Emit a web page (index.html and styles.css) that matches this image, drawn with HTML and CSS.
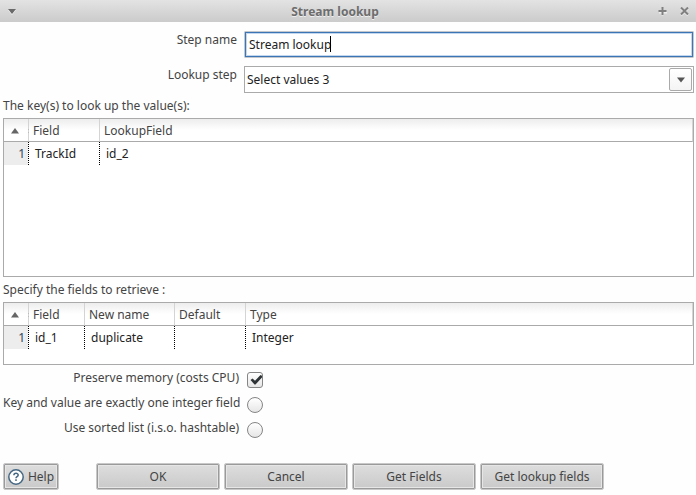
FILE: index.html
```html
<!DOCTYPE html>
<html lang="en">
<head>
<meta charset="utf-8">
<title>Stream lookup</title>
<link rel="stylesheet" href="styles.css">
</head>
<body>
<header class="titlebar">
  <button class="window-button" type="button" aria-label="Window menu">
    <svg width="10" height="7" viewBox="0 0 10 7"><path d="M1 2h8L5 7z" fill="#fff" opacity=".7"/><path d="M1 1h8L5 6z" fill="#6a6a6a"/></svg>
  </button>
  <h1 class="title">Stream lookup</h1>
  <div class="window-actions">
    <button class="window-button" type="button" aria-label="Maximize">
      <svg width="9" height="9" viewBox="0 0 9 9"><path d="M4.500 1.500v7M1 5.500h8" stroke="#fff" stroke-width="2" opacity=".6"/><path d="M4.500 0v8M.5 4h8" stroke="#808080" stroke-width="2"/></svg>
    </button>
    <button class="window-button" type="button" aria-label="Close">
      <svg width="9" height="9" viewBox="0 0 9 9"><path d="M1 1.500l7 7M8 1.500l-7 7" stroke="#fff" stroke-width="2" opacity=".6"/><path d="M1 .5l7 7M8 .5l-7 7" stroke="#808080" stroke-width="2"/></svg>
    </button>
  </div>
</header>
<form class="dialog">
  <div class="fields">
    <label for="step-name">Step name</label>
    <div class="text-box">
      <input class="text-input" id="step-name" type="text" value="Stream lookup">
      <span class="caret-line" aria-hidden="true"><span class="caret-text">Stream lookup</span></span>
    </div>
    <label for="lookup-step">Lookup step</label>
    <div class="combo">
      <select class="combo-select" id="lookup-step"><option>Select values 3</option></select>
      <span class="combo-arrow" aria-hidden="true"><svg width="8" height="6" viewBox="0 0 8 6"><path d="M0 .5h8L4 5.500z" fill="#555"/></svg></span>
    </div>
  </div>

  <h2 class="caption" id="keys-caption">The key(s) to look up the value(s):</h2>
  <div class="grid-box keys-box">
    <table class="grid" aria-labelledby="keys-caption">
      <colgroup><col class="col-number"><col class="col-key"><col></colgroup>
      <thead><tr>
        <th><svg class="sort" width="18" height="6" viewBox="0 0 18 6"><path d="M4 0l4 5.500H0z" fill="#666"/><path d="M17 1h1v1h-1zM17 4h1v1h-1z" fill="#bbb"/></svg></th>
        <th>Field</th><th>LookupField</th>
      </tr></thead>
      <tbody><tr><td>1</td><td>TrackId</td><td>id_2</td></tr></tbody>
    </table>
  </div>

  <h2 class="caption" id="values-caption">Specify the fields to retrieve :</h2>
  <div class="grid-box values-box">
    <table class="grid" aria-labelledby="values-caption">
      <colgroup><col class="col-number"><col class="col-field"><col class="col-name"><col class="col-default"><col></colgroup>
      <thead><tr>
        <th><svg class="sort" width="18" height="6" viewBox="0 0 18 6"><path d="M4 0l4 5.500H0z" fill="#666"/><path d="M17 1h1v1h-1zM17 4h1v1h-1z" fill="#bbb"/></svg></th>
        <th>Field</th><th>New name</th><th>Default</th><th>Type</th>
      </tr></thead>
      <tbody><tr><td>1</td><td>id_1</td><td>duplicate</td><td></td><td>Integer</td></tr></tbody>
    </table>
  </div>

  <div class="options">
    <label for="preserve">Preserve memory (costs CPU)</label>
    <span class="check">
      <input class="tick" id="preserve" type="checkbox" checked>
      <svg class="mark" width="16" height="16" viewBox="0 0 16 16"><path d="M3.500 8l2-1.500L8 8.800 13.500 3l1.500.8v1.700L8.500 12.500H7.500z" fill="#2e3436"/></svg>
    </span>
    <label for="integer-pair">Key and value are exactly one integer field</label>
    <input class="tick round" id="integer-pair" type="radio" name="mode">
    <label for="sorted-list">Use sorted list (i.s.o. hashtable)</label>
    <input class="tick round" id="sorted-list" type="radio" name="mode">
  </div>

  <div class="actions">
    <button class="button help" type="button">
      <svg width="16" height="16" viewBox="0 0 16 16"><circle cx="8" cy="8" r="7.200" fill="#fff" stroke="#456783" stroke-width="1.500"/><path d="M5.900 6.200C5.900 3.700 10.200 3.800 10.200 6.100 10.200 7.700 8 7.600 8 9.200" fill="none" stroke="#456783" stroke-width="1.500"/><rect x="7.200" y="10.300" width="1.600" height="1.600" fill="#456783"/></svg>
      Help</button>
    <button class="button" type="button">OK</button>
    <button class="button" type="button">Cancel</button>
    <button class="button" type="button">Get Fields</button>
    <button class="button" type="button">Get lookup fields</button>
  </div>
</form>
</body>
</html>
```
FILE: styles.css
```css
* { box-sizing: border-box; }

body {
  margin: 0;
  background: #fefefe;
  color: #444;
  font: 12px/18px "Noto Sans", sans-serif;
}

input, select, button { margin: 0; color: inherit; font: inherit; }
svg { display: block; }

.titlebar {
  display: flex;
  align-items: center;
  height: 22px;
  padding: 0 6px;
  background: linear-gradient(#e3e3e3, #cbcbcb);
}

.title {
  flex: 1;
  margin: 0;
  padding-top: 2px;
  color: #6d6d6d;
  font-size: 12px;
  line-height: 20px;
  text-align: center;
  text-shadow: 0 1px #eee;
}

.window-button {
  display: grid;
  place-items: center;
  width: 12px;
  height: 12px;
  padding: 0;
  border: 0;
  background: none;
}

.window-actions { display: flex; gap: 10px; padding-left: 4px; }

.dialog { padding: 9px 2px 5px 3px; }

.fields {
  display: grid;
  grid-template-columns: 234px 1fr;
  gap: 8px 7px;
}

.fields label, .options label { text-align: right; white-space: nowrap; }

.text-box { position: relative; height: 27px; color: #222; }

.text-input {
  display: block;
  width: 100%;
  height: 27px;
  padding: 0 4px;
  border: 1px solid #c4c8cc;
  border-radius: 1px;
  outline: 1px solid #3c75b5;
  outline-offset: -2px;
  background: #fff;
  box-shadow: inset 0 0 0 2px #c3d8ee;
}

/* Insertion bar placed after the current value. */
.caret-line {
  position: absolute;
  top: 5px;
  left: 4px;
  height: 16px;
  overflow: hidden;
  border-right: 1px solid #000;
  pointer-events: none;
}

.caret-text { visibility: hidden; }

.combo { position: relative; height: 27px; }

.combo-select {
  display: block;
  width: 100%;
  height: 27px;
  padding: 0 26px 0 2px;
  border: 1px solid #aaa;
  border-radius: 0;
  appearance: none;
  background: #fff;
  color: #222;
}

.combo-arrow {
  position: absolute;
  top: 2px;
  right: 2px;
  display: grid;
  place-items: center;
  width: 23px;
  height: 23px;
  border: 1px solid #aaa;
  border-radius: 2px;
  background: linear-gradient(#fff, #f4f4f4);
  pointer-events: none;
}

.caption { margin: 0; font-size: 12px; font-weight: 400; line-height: 25px; }

.grid-box { border: 1px solid #aaa; background: #fff; }
.keys-box { height: 159px; }
.values-box { height: 63px; }

.grid {
  width: 100%;
  table-layout: fixed;
  border-collapse: separate;
  border-spacing: 0;
}

.col-number { width: 25px; }
.col-key, .col-default { width: 71px; }
.col-field { width: 56px; }
.col-name { width: 90px; }

.grid th, .grid td { height: 23px; padding: 0; line-height: 22px; text-align: left; }

.grid th {
  padding: 2px 0 0 4px;
  border-right: 1px solid #d4d4d4;
  border-bottom: 1px solid #aaa;
  background: linear-gradient(#ededed, #fff 50%);
  font-weight: 400;
  line-height: 20px;
}

.grid td {
  padding-left: 6px;
  background: repeating-linear-gradient(#000 0 1px, #fff 1px 2px) right / 1px 100% no-repeat;
  color: #222;
}

.grid td:last-child { background: none; }

.grid td:first-child {
  padding: 0 4px 0 0;
  background-color: #ededed;
  color: #31475b;
  text-align: right;
}

.sort { margin-left: 4px; }
.grid th:first-child { padding-left: 3px; }

.options {
  display: grid;
  grid-template-columns: 236px 16px;
  grid-auto-rows: 16px;
  gap: 9px 8px;
  padding-top: 7px;
}

.options label { line-height: 12px; }
.check { position: relative; }
.mark { position: absolute; inset: 0; pointer-events: none; }

.tick {
  display: block;
  width: 16px;
  height: 16px;
  border: 1px solid #858585;
  border-radius: 3px;
  appearance: none;
  background: linear-gradient(#fff, #e6e6e6);
}

.round { border-radius: 50%; }

.actions { display: flex; gap: 4px; padding-top: 25px; }

.button {
  width: 124px;
  height: 27px;
  padding: 0;
  border: 1px solid #c8c8c8;
  outline: 1px solid #9a9a9a;
  outline-offset: -2px;
  border-radius: 2px;
  background: linear-gradient(#dedede, #c9c9c9);
  box-shadow: inset 0 0 0 2px #e6e6e6;
}

.help {
  display: flex;
  align-items: center;
  justify-content: center;
  gap: 4px;
  width: 56px;
  margin-right: 33px;
}
```
